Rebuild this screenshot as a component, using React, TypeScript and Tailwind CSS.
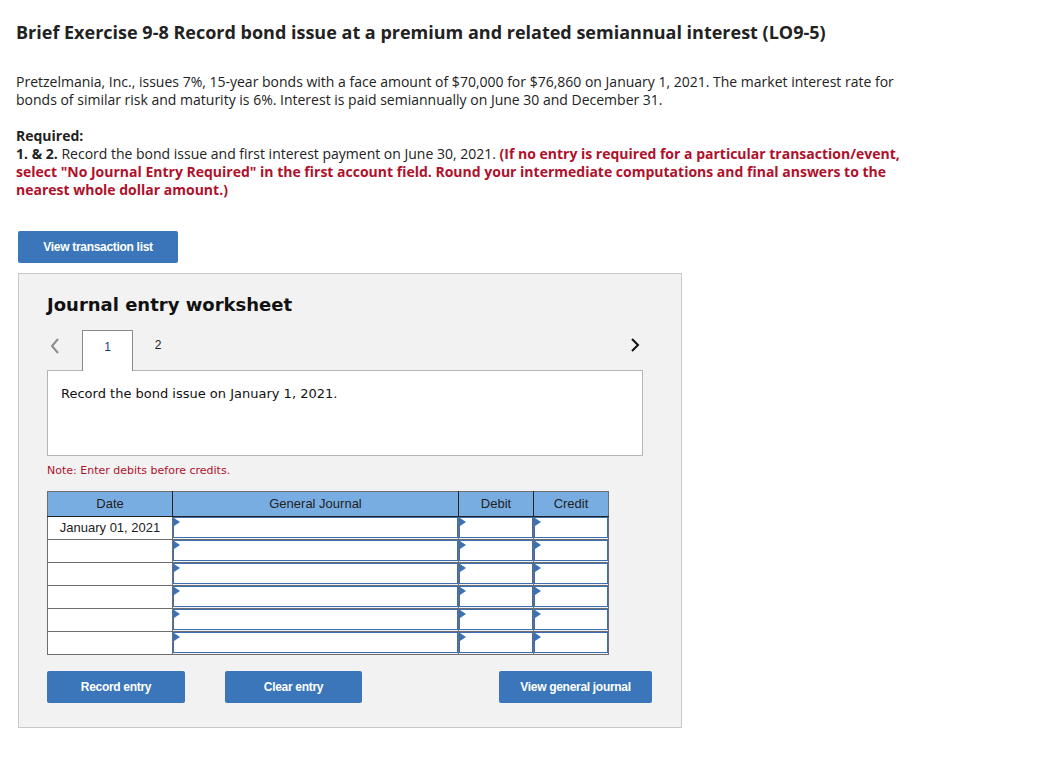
import React from "react";

const Tri = () => (
  <span className="absolute left-0 top-0 w-0 h-0 border-y-[4px] border-y-transparent border-l-[6px] border-l-[#3a72b8]" />
);

const InputCell = ({ w }: { w: string }) => (
  <td className={`${w} h-[23px] p-0 border border-[#6e6e6e]`}>
    <div className="relative h-[21px] border border-[#3c6fb2] bg-white">
      <Tri />
    </div>
  </td>
);

const Btn = ({ label, w }: { label: string; w: string }) => (
  <button
    className={`${w} shrink-0 h-[32px] rounded-[2px] bg-[#3a76b9] text-white text-[12px] font-bold tracking-[-0.3px] font-['Liberation_Sans',Arial,sans-serif]`}
  >
    {label}
  </button>
);

const App = () => {
  const rows = ["January 01, 2021", "", "", "", "", ""];
  return (
    <div className="w-[1050px] min-h-[778px] bg-white px-4 pt-[20px] font-['Open_Sans',sans-serif] text-[#222]">
      <h1 className="text-[18px] font-bold leading-[24px] text-[#222]">
        Brief Exercise 9-8 Record bond issue at a premium and related semiannual interest (LO9-5)
      </h1>

      <p className="mt-[29px] text-[14px] leading-[18px] w-[920px]">
        Pretzelmania, Inc., issues 7%, 15-year bonds with a face amount of $70,000 for $76,860 on January 1, 2021. The market interest rate for bonds of similar risk and maturity is 6%. Interest is paid semiannually on June 30 and December 31.
      </p>

      <div className="mt-[18px] text-[14px] leading-[18px] w-[905px]">
        <div className="font-bold">Required:</div>
        <div>
          <span className="font-bold">1. &amp; 2.</span> Record the bond issue and first interest payment on June 30, 2021.{" "}
          <span className="font-bold text-[#b0102b]">
            (If no entry is required for a particular transaction/event, select "No Journal Entry Required" in the first account field. Round your intermediate computations and final answers to the nearest whole dollar amount.)
          </span>
        </div>
      </div>

      <div className="mt-[32px] ml-[2px]">
        <Btn label="View transaction list" w="w-[160px]" />
      </div>

      <div className="mt-[10px] ml-[2px] w-[664px] border border-[#c8c8c8] bg-[#f2f2f2] pl-[28px] pr-[39px] pt-[19px] pb-[24px] font-['DejaVu_Sans',Verdana,sans-serif]">
        <h2 className="text-[18px] font-bold leading-[24px] text-[#111]">Journal entry worksheet</h2>

        <div className="mt-[12px] flex items-end justify-between">
          <div className="flex items-end">
            <span className="w-[35px] pl-[3px] pb-[16px]">
              <svg width="10" height="16" viewBox="0 0 10 16">
                <path d="M8 1 L2 8 L8 15" fill="none" stroke="#8c8c8c" strokeWidth="2" />
              </svg>
            </span>
            <div className="relative z-10 -mb-px h-[41px] w-[51px] border border-b-0 border-[#8a8a8a] bg-white pt-[9px] text-center text-[12px] leading-[14px] font-['Liberation_Sans',Arial,sans-serif] text-[#0a3f8a]">
              1
            </div>
            <div className="h-[41px] w-[50px] pt-[9px] text-center text-[12px] leading-[14px] font-['Liberation_Sans',Arial,sans-serif] text-[#222]">
              2
            </div>
          </div>
          <span className="pb-[18px] pr-[2px]">
            <svg width="10" height="14" viewBox="0 0 10 14">
              <path d="M2 1 L8 7 L2 13" fill="none" stroke="#111" strokeWidth="2" />
            </svg>
          </span>
        </div>

        <div className="h-[86px] w-[596px] border border-[#b5b5b5] bg-white px-[13px] pt-[13px] text-[13px] text-[#111]">
          Record the bond issue on January 1, 2021.
        </div>

        <div className="mt-[7px] text-[11px] text-[#b0102b]">Note: Enter debits before credits.</div>

        <table className="mt-[11px] border-collapse font-['Liberation_Sans',Arial,sans-serif] text-[13px] text-[#222]">
          <thead>
            <tr className="h-[25px] bg-[#78ade2]">
              <th className="w-[125px] border border-[#6e6e6e] border-r-[#222] border-b-[#222] font-normal">Date</th>
              <th className="w-[286px] border border-[#6e6e6e] border-r-[#222] border-b-[#222] font-normal">General Journal</th>
              <th className="w-[75px] border border-[#6e6e6e] border-r-[#222] border-b-[#222] font-normal">Debit</th>
              <th className="w-[75px] border border-[#6e6e6e] border-b-[#222] font-normal">Credit</th>
            </tr>
          </thead>
          <tbody>
            {rows.map((d, i) => (
              <tr key={i}>
                <td className="w-[125px] h-[23px] border border-[#6e6e6e] bg-white text-center align-top leading-[22px]">
                  {d}
                </td>
                <InputCell w="w-[286px]" />
                <InputCell w="w-[75px]" />
                <InputCell w="w-[75px]" />
              </tr>
            ))}
          </tbody>
        </table>

        <div className="mt-[16px] flex">
          <Btn label="Record entry" w="w-[138px]" />
          <div className="ml-[40px] shrink-0">
            <Btn label="Clear entry" w="w-[137px]" />
          </div>
          <div className="ml-[137px] shrink-0">
            <Btn label="View general journal" w="w-[153px]" />
          </div>
        </div>
      </div>
    </div>
  );
};

export default App;
